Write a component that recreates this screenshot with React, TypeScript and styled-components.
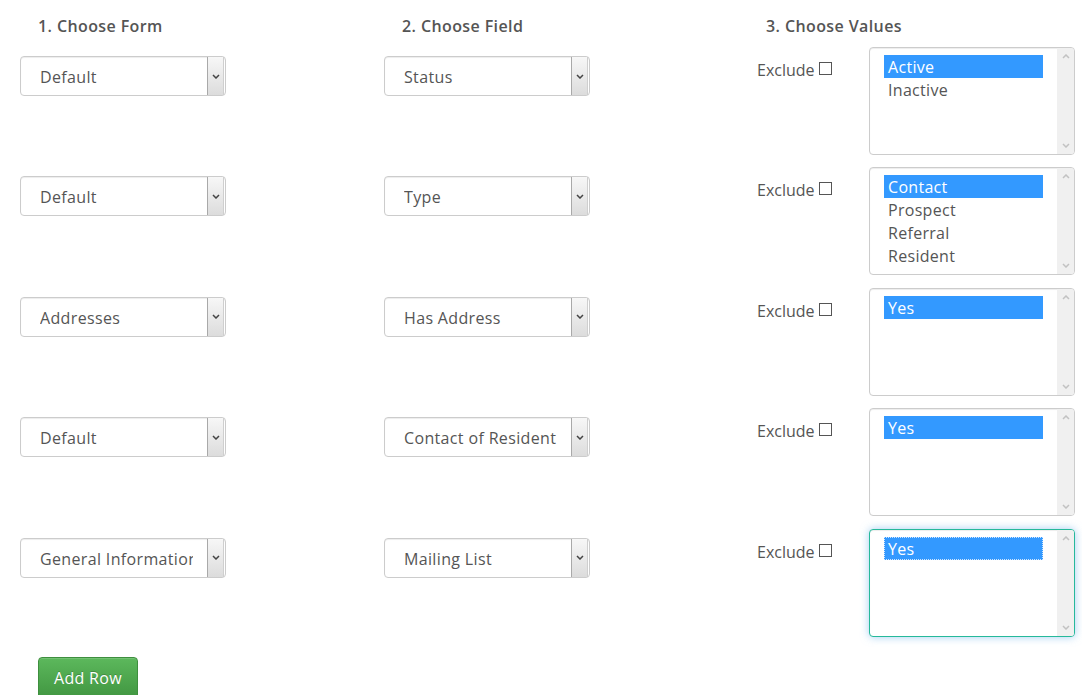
import styled, { createGlobalStyle } from "styled-components";

const GlobalStyle = createGlobalStyle`
  body {
    margin: 0;
    background: #fff;
    font-family: "Open Sans", "Liberation Sans", sans-serif;
    color: #555;
  }
`;

const Page = styled.div`
  width: 1082px;
  height: 695px;
  overflow: hidden;
`;

const Columns = styled.div`
  display: grid;
  grid-template-columns: 364px 364px 1fr;
`;

const HeaderRow = styled(Columns)`
  height: 47px;
`;

const Header = styled.h4`
  margin: 0;
  padding: 15px 0 0 38px;
  font-size: 16px;
  line-height: 22px;
  font-weight: 600;
  letter-spacing: 0.4px;
  color: #555;
`;

const Rows = styled(Columns)`
  grid-auto-rows: 108px;
  row-gap: 12.4px;
`;

const SelectCell = styled.div`
  padding: 9px 0 0 20px;
`;

const SelectBox = styled.div`
  box-sizing: border-box;
  width: 206px;
  height: 40px;
  display: flex;
  align-items: stretch;
  padding-left: 19px;
  border: 1px solid #ccc;
  border-radius: 4px;
  background: #fff;
  box-shadow: inset 0 1px 1px rgba(0, 0, 0, 0.075);
`;

const SelectText = styled.div`
  flex: 1;
  min-width: 0;
  display: flex;
  align-items: center;
  margin-right: 14px;
  padding-top: 2px;
  overflow: hidden;
  white-space: nowrap;
  font-size: 16px;
  letter-spacing: 0.35px;
  color: #555;
`;

const ArrowButton = styled.div`
  width: 15px;
  margin: 0 1px 0 0;
  display: flex;
  align-items: center;
  justify-content: center;
  border-left: 1px solid #a9a9a9;
  border-right: 1px solid #cfcfcf;
  background: linear-gradient(#f7f7f7, #dcdcdc);
`;

const ValuesCell = styled.div`
  display: flex;
  align-items: flex-start;
`;

const ExcludeLabel = styled.label`
  box-sizing: border-box;
  width: 141px;
  padding: 12px 0 0 29px;
  display: flex;
  align-items: flex-start;
  gap: 4px;
  font-size: 16px;
  line-height: 22px;
  color: #555;
`;

const CheckBox = styled.input.attrs({ type: "checkbox" })`
  appearance: none;
  margin: 3px 0 0;
  width: 13px;
  height: 13px;
  box-sizing: border-box;
  border: 1px solid #555;
  background: #fff;
`;

const ListBox = styled.div<{ $focused?: boolean }>`
  box-sizing: border-box;
  width: 206px;
  height: 108px;
  display: flex;
  border: 1px solid ${(p) => (p.$focused ? "#26b99a" : "#ccc")};
  border-radius: 4px;
  background: #fff;
  overflow: hidden;
  box-shadow: ${(p) =>
    p.$focused
      ? "inset 0 1px 1px rgba(0,0,0,.075), 0 0 8px rgba(102,175,233,.6)"
      : "inset 0 1px 1px rgba(0,0,0,.075)"};
`;

const Options = styled.div`
  flex: 1;
  padding: 7px 14px 0;
`;

const Option = styled.div<{ $selected?: boolean; $focused?: boolean }>`
  height: 23px;
  line-height: 24px;
  padding-left: 4px;
  font-size: 16px;
  letter-spacing: 0.3px;
  color: ${(p) => (p.$selected ? "#fff" : "#555")};
  background: ${(p) => (p.$selected ? "#3399ff" : "transparent")};
  outline: ${(p) => (p.$focused ? "1px dotted #cfe6ff" : "none")};
  outline-offset: -1px;
`;

const ScrollTrack = styled.div`
  width: 17px;
  display: flex;
  flex-direction: column;
  justify-content: space-between;
  align-items: center;
  padding: 6px 0;
  background: #f0f0f0;
`;

const AddButton = styled.button`
  margin: 20px 0 0 38px;
  width: 100px;
  height: 42px;
  padding: 0;
  border: 1px solid #3e8f3e;
  border-radius: 4px;
  background: linear-gradient(#5cb85c, #419641);
  color: #fff;
  font-family: "Open Sans", "Liberation Sans", sans-serif;
  font-size: 16px;
  letter-spacing: 0.3px;
  text-shadow: 0 -1px 0 rgba(0, 0, 0, 0.2);
  box-shadow: inset 0 1px 0 rgba(255, 255, 255, 0.15);
`;

const Chevron = ({ up, color }: { up?: boolean; color: string }) => (
  <svg width="8" height="5" viewBox="0 0 8 5">
    <path
      d={up ? "M1 4 L4 1 L7 4" : "M1 1 L4 4 L7 1"}
      fill="none"
      stroke={color}
      strokeWidth="1.5"
    />
  </svg>
);

type Row = {
  form: string;
  field: string;
  values: string[];
  focused?: boolean;
};

const rows: Row[] = [
  { form: "Default", field: "Status", values: ["Active", "Inactive"] },
  { form: "Default", field: "Type", values: ["Contact", "Prospect", "Referral", "Resident"] },
  { form: "Addresses", field: "Has Address", values: ["Yes"] },
  { form: "Default", field: "Contact of Resident", values: ["Yes"] },
  { form: "General Information", field: "Mailing List", values: ["Yes"], focused: true },
];

function Select({ value }: { value: string }) {
  return (
    <SelectBox>
      <SelectText>{value}</SelectText>
      <ArrowButton>
        <Chevron color="#444" />
      </ArrowButton>
    </SelectBox>
  );
}

export default function App() {
  return (
    <Page>
      <GlobalStyle />
      <HeaderRow>
        <Header>1. Choose Form</Header>
        <Header>2. Choose Field</Header>
        <Header>3. Choose Values</Header>
      </HeaderRow>
      <Rows>
        {rows.map((row, i) => (
          <>
            <SelectCell key={`form-${i}`}>
              <Select value={row.form} />
            </SelectCell>
            <SelectCell key={`field-${i}`}>
              <Select value={row.field} />
            </SelectCell>
            <ValuesCell key={`values-${i}`}>
              <ExcludeLabel>
                Exclude <CheckBox />
              </ExcludeLabel>
              <ListBox $focused={row.focused}>
                <Options>
                  {row.values.map((v, j) => (
                    <Option key={v} $selected={j === 0} $focused={row.focused && j === 0}>
                      {v}
                    </Option>
                  ))}
                </Options>
                <ScrollTrack>
                  <Chevron up color="#c2c2c2" />
                  <Chevron color="#c2c2c2" />
                </ScrollTrack>
              </ListBox>
            </ValuesCell>
          </>
        ))}
      </Rows>
      <AddButton>Add Row</AddButton>
    </Page>
  );
}
